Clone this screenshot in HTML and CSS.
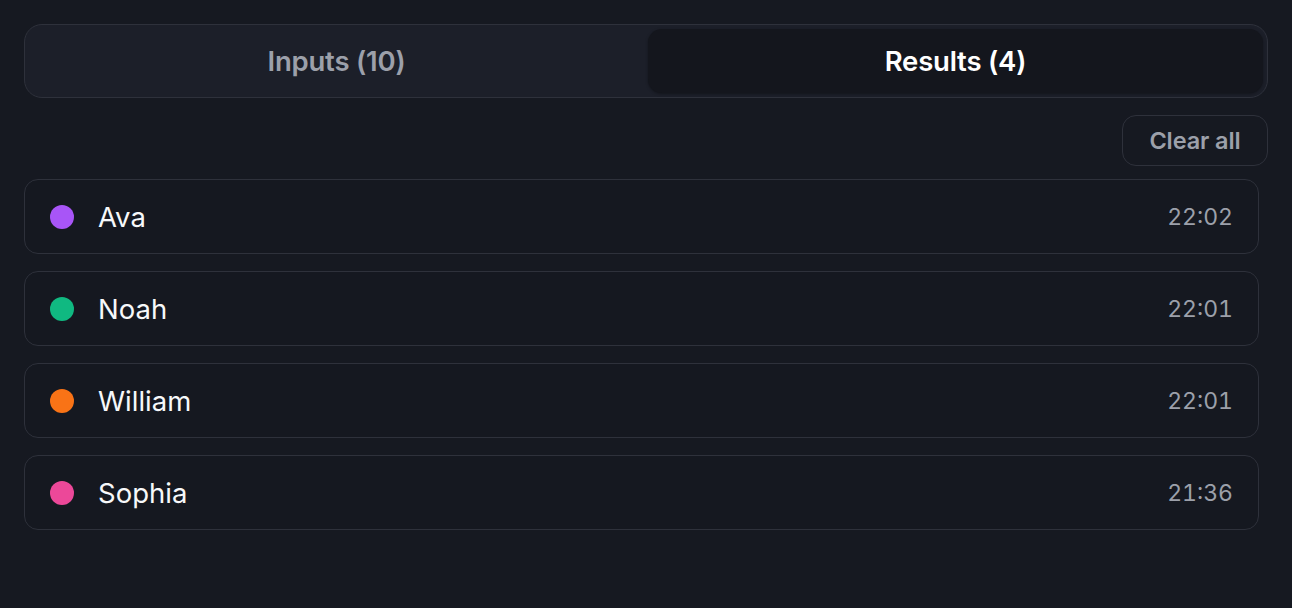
FILE: index.html
```html
<!DOCTYPE html>
<html>
<head>
<meta charset="utf-8">
<link rel="stylesheet" href="styles.css">
</head>
<body>
<div class="panel">
  <div class="tabs">
    <div class="tab">Inputs (10)</div>
    <div class="tab active">Results (4)</div>
  </div>
  <div class="toolbar">
    <button class="clear">Clear all</button>
  </div>
  <ul class="list">
    <li class="row"><span class="dot purple"></span><span class="name">Ava</span><span class="time">22:02</span></li>
    <li class="row"><span class="dot green"></span><span class="name">Noah</span><span class="time">22:01</span></li>
    <li class="row"><span class="dot orange"></span><span class="name">William</span><span class="time">22:01</span></li>
    <li class="row"><span class="dot pink"></span><span class="name">Sophia</span><span class="time">21:36</span></li>
  </ul>
</div>
</body>
</html>
```
FILE: styles.css
```css
html, body {
  margin: 0;
  padding: 0;
  background: #161921;
  height: 100%;
}
body {
  font-family: Inter, "Noto Sans", sans-serif;
  color: #f3f4f6;
}
.panel {
  padding: 24px 24px 0 24px;
}
.tabs {
  display: grid;
  grid-template-columns: 1fr 1fr;
  gap: 4px;
  padding: 4px;
  height: 74px;
  box-sizing: border-box;
  background: #1c1f29;
  border: 1.5px solid #2e313b;
  border-radius: 18px;
}
.tab {
  display: flex;
  align-items: center;
  justify-content: center;
  font-size: 27.5px;
  font-weight: 600;
  letter-spacing: -0.2px;
  color: #9ca0aa;
  border-radius: 14px;
}
.tab.active {
  background: #14161d;
  color: #ffffff;
  box-shadow: 0 1px 3px rgba(0,0,0,0.35);
}
.toolbar {
  display: flex;
  justify-content: flex-end;
  margin-top: 17px;
}
.clear {
  font-family: inherit;
  font-size: 23.5px;
  font-weight: 600;
  color: #9ca0aa;
  background: transparent;
  border: 1.5px solid #2e313b;
  border-radius: 14px;
  height: 51px;
  width: 146px;
  padding: 0;
  letter-spacing: -0.1px;
}
.list {
  list-style: none;
  margin: 13px 9px 0 0;
  padding: 0;
  display: flex;
  flex-direction: column;
  gap: 17px;
}
.row {
  display: flex;
  align-items: center;
  height: 75px;
  box-sizing: border-box;
  padding: 0 25px;
  border: 1.5px solid #2e313b;
  border-radius: 14px;
  background: #151820;
}
.dot {
  width: 24px;
  height: 24px;
  border-radius: 50%;
  flex: none;
}
.purple { background: #a855f7; }
.green { background: #10b981; }
.orange { background: #f97316; }
.pink { background: #ec4899; }
.name {
  margin-left: 24px;
  font-size: 27.5px;
  font-weight: 400;
  color: #f7f8fa;
  flex: 1;
}
.time {
  font-size: 23px;
  color: #9ca0aa;
  font-weight: 400;
  font-variant-numeric: tabular-nums;
}
```
